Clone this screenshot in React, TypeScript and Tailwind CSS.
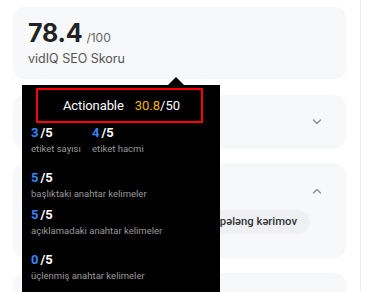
import React from "react";

function Chevron({ up }: { up?: boolean }) {
  return (
    <svg width="10" height="6" viewBox="0 0 10 6" fill="none" stroke="#8a8f98" strokeWidth="1.4" strokeLinecap="round" strokeLinejoin="round">
      {up ? <path d="M1.5 5 L5 1.5 L8.5 5" /> : <path d="M1.5 1 L5 4.5 L8.5 1" />}
    </svg>
  );
}

function Score({ v }: { v: string }) {
  return (
    <div className="text-[13px] font-bold leading-[16px]">
      <span className="text-[#3b82f6]">{v}</span>
      <span className="text-white ml-[2px]">/5</span>
    </div>
  );
}

function Label({ t }: { t: string }) {
  return <div className="text-[9.5px] leading-[12px] text-[#9a9a9a] mt-[2px]">{t}</div>;
}

export default function App() {
  return (
    <div className="relative w-[376px] h-[292px] overflow-hidden bg-white" style={{ fontFamily: "Inter, 'Noto Sans', sans-serif" }}>
      <div className="w-[361px] h-full border-r border-[#eceef1] pl-[13px] pr-[14px] pt-[7px] flex flex-col">
        <div className="shrink-0 h-[72px] rounded-[10px] bg-[#f7f8fa] pl-[15px] pt-[11px]">
          <div className="flex items-baseline">
            <span className="text-[25px] font-bold text-[#222] leading-[30px] tracking-[-0.2px]">78.4</span>
            <span className="text-[12px] text-[#666] ml-[4px]">/100</span>
          </div>
          <div className="text-[12.5px] text-[#555] mt-[3px] leading-[16px]">vidIQ SEO Skoru</div>
        </div>
        <div className="shrink-0 mt-[16px] h-[54px] rounded-[12px] bg-[#f7f8fa] flex items-center justify-end pr-[24px]">
          <Chevron />
        </div>
        <div className="shrink-0 mt-[14px] h-[95px] rounded-[12px] bg-[#f7f8fa] pr-[24px] pt-[25px]">
          <div className="flex justify-end"><Chevron up /></div>
          <div className="mt-[16px] flex justify-end pr-[12px]">
            <div
              className="h-[24px] rounded-full bg-[#eef0f3] flex items-center pl-[14px] pr-[13px] text-[11.3px] font-medium text-[#333]"
              style={{ fontFamily: "Roboto, 'Noto Sans', sans-serif" }}
            >
              Dhruv Rathee pələng kərimov
            </div>
          </div>
        </div>
        <div className="shrink-0 mt-[15px] h-[60px] rounded-[12px] bg-[#f7f8fa]" />
      </div>

      <div className="absolute left-[22px] top-[85px] w-[198px] h-[220px] bg-black" style={{ fontFamily: "Roboto, 'Noto Sans', sans-serif" }}>
        <div className="absolute left-[145px] top-[-8px] w-0 h-0 border-l-[9px] border-r-[9px] border-b-[9px] border-l-transparent border-r-transparent border-b-black" />
        <div className="ml-[14px] mt-[3px] w-[167px] h-[35px] border-2 border-[#ff0000] flex items-center justify-center pl-[4px] text-[13px] font-normal">
          <span className="text-white tracking-[-0.1px]">Actionable</span>
          <span className="ml-[11px] text-[#f2b705]">30.8</span>
          <span className="text-white">/50</span>
        </div>
        <div className="pl-[9px] pt-[2px]">
          <div className="flex">
            <div className="w-[61px]">
              <Score v="3" />
              <Label t="etiket sayısı" />
            </div>
            <div>
              <Score v="4" />
              <Label t="etiket hacmi" />
            </div>
          </div>
          <div className="mt-[15px]">
            <Score v="5" />
            <Label t="başlıktaki anahtar kelimeler" />
          </div>
          <div className="mt-[7px]">
            <Score v="5" />
            <Label t="açıklamadaki anahtar kelimeler" />
          </div>
          <div className="mt-[15px]">
            <Score v="0" />
            <Label t="üçlenmiş anahtar kelimeler" />
          </div>
        </div>
      </div>
    </div>
  );
}
